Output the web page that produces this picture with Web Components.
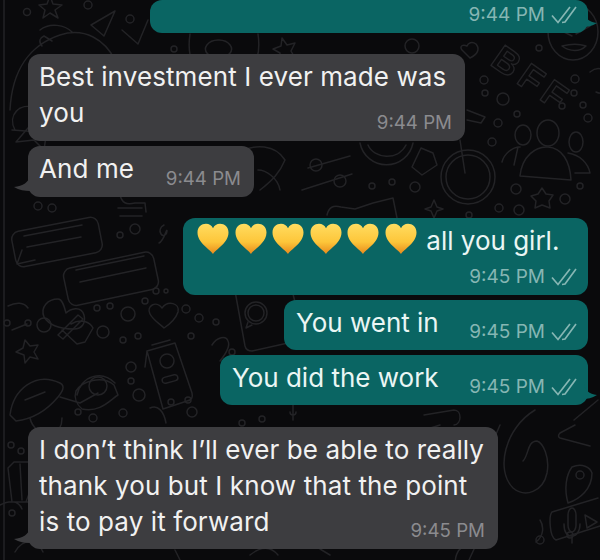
<!DOCTYPE html>
<html>
<head>
<meta charset="utf-8">
<style>
  html, body { margin: 0; padding: 0; background: #0a0a0c; }
  body { width: 600px; height: 560px; overflow: hidden; font-family: Inter, "Liberation Sans", sans-serif; }
</style>
</head>
<body>
<chat-wallpaper></chat-wallpaper>
<chat-thread>
  <chat-bubble side="out" time="9:44 PM" tail style="--w:438px;--h:33px;--gap:0px"></chat-bubble>
  <chat-bubble side="in" time="9:44 PM" style="--w:437px;--h:87px;--gap:21px">Best investment I ever made was<br>you</chat-bubble>
  <chat-bubble side="in" time="9:44 PM" tail style="--w:226px;--h:51px;--gap:5px">And me</chat-bubble>
  <chat-bubble side="out" time="9:45 PM" style="--w:405px;--h:77px;--gap:21px"><heart-row count="6"></heart-row> all you girl.</chat-bubble>
  <chat-bubble side="out" time="9:45 PM" style="--w:304px;--h:50px;--gap:5px">You went in</chat-bubble>
  <chat-bubble side="out" time="9:45 PM" tail style="--w:368px;--h:50px;--gap:5px">You did the work</chat-bubble>
  <chat-bubble side="in" time="9:45 PM" tail style="--w:470px;--h:122px;--gap:22px">I don’t think I’ll ever be able to really<br>thank you but I know that the point<br>is to pay it forward</chat-bubble>
</chat-thread>

<script>
class ChatWallpaper extends HTMLElement {
  constructor() {
    super();
    this.shadowDOM = this.attachShadow({ mode: "open" });
  }

  connectedCallback() {
    // small bubbles scattered through the doodles: x, y, r
    const dots = [
      [27,12,3.5],[88,5,4],[130,19,4],[174,49,3],[38,206,4],[52,208,4],[135,229,5],[120,235,3],
      [412,46,7],[488,14,3],[539,48,3],[484,80,4],[485,93,3],[503,99,6],[575,79,4],[574,93,3],
      [562,106,3],[583,105,3],[517,114,3],[588,118,4],[498,123,4],[492,142,4],[372,186,3],[392,182,3],
      [415,187,5],[516,189,5],[565,199,5],[499,208,4],[519,210,5],[469,215,3],[580,186,3],
      [7,323,3],[28,323,3],[44,325,7],[97,308,3],[110,306,3],[128,314,7],[103,332,6],[123,340,3],
      [138,336,3],[156,291,3],[166,291,2],[145,301,3],[186,309,4],[199,318,4],[216,322,3],[191,336,3],
      [131,367,5],[131,381,3],[139,395,6],[78,412,3],[93,418,4],[123,413,4],[188,400,3],[171,402,3],
      [192,412,5],[242,423,3],[262,419,3],[11,445,3],[21,451,3],[12,513,3],[540,540,4],[570,535,3]
    ].map(([x, y, r]) => `<circle cx="${x}" cy="${y}" r="${r}"/>`).join("");

    this.shadowDOM.innerHTML = `
      <style>
        :host { position: absolute; left: 0; top: 0; width: 600px; height: 560px; display: block; }
        svg { display: block; }
        g { fill: none; stroke: #232326; stroke-width: 1.5; stroke-linejoin: round; stroke-linecap: round; filter: blur(.4px); }
        text { font: 700 36px "Liberation Sans", sans-serif; letter-spacing: 6px; fill: none; stroke: #232326; stroke-width: 1.4; }
      </style>
      <svg width="600" height="560" viewBox="0 0 600 560" aria-hidden="true">
        <g>
          <path d="M4 0V560"/>
          ${dots}
          <path d="M50 -4l3 8 9 1-7 5 3 8-8-5-7 5 2-8-6-5 8-1z"/>
          <path d="M115 11L91 25l13 11zM104 36l11-25"/>
          <path d="M122 30l16 14 10-24"/>
          <path d="M10 110C12 70 30 45 60 35c25-8 45 5 55 25M40 30c10-8 25-5 32 2M42 46c-4-5-2-8 2-10l8 5"/>
          <path d="M190 34c-3 20 2 35 15 44M258 34c3 20-3 35-15 44M218 40a13 9 0 1 0 1 0z"/>
          <path d="M282 38l5 7 8-2-4 8 4 7-9-2-6 6v-9l-7-4 8-3z"/>
          <path d="M15 130c-8-15 5-28 20-22M12 130l28 2M28 128l-12 14 18-2 10 10 2-14 12-6-14-4-6-12-4 12z"/>
          <path d="M240 152c15-8 35-8 45 8-5 12-12 20-25 30M258 170c8 0 20 8 22 20"/>
          <path d="M120 195c2 8 6 10 15 8h10l1 9M118 208h24M120 216h22"/>
          <rect x="13" y="224" width="88" height="36" rx="8" transform="rotate(-11 57 242)"/>
          <path d="M22 250l-5 14 18-4M24 236l58-11M27 247l54-10"/>
          <rect x="65" y="260" width="92" height="38" rx="8" transform="rotate(-12 110 279)"/>
          <path d="M76 270l68-14M80 282l66-14"/>
          <path d="M164 225c-4 2-5 6-3 9s6 1 6-3-3 10-8 12"/>
          <path d="M302 190l50-16M308 168l42-12"/>
          <circle cx="316" cy="165" r="6"/><circle cx="340" cy="181" r="6"/>
          <path d="M360 143a27 27 0 0 0 53 0M368 145c6 14 30 16 38 0"/>
          <path d="M467 110l18 7-4 6-14-3M460 140l5 33M421 148l12 5 4 12-15 10-10-8z"/>
          <circle cx="468" cy="177" r="27"/><circle cx="468" cy="177" r="22"/>
          <path d="M520 176c2-20 16-30 28-29 14 1 22 14 23 33z"/>
          <ellipse cx="548" cy="133" rx="11" ry="13"/>
          <ellipse cx="523" cy="135" rx="8" ry="10"/>
          <ellipse cx="576" cy="142" rx="7" ry="10"/>
          <path d="M502 162c2-8 10-15 18-15M518 147l-4 18zM568 153c12 2 20 10 22 20l-15 0"/>
          <path d="M542 188l4 6 7 1-4 6 1 7-8-3-7 3 1-7-5-5 7-2z"/>
          <path d="M434 200l3 7 6 2-6 2-3 7-3-7-6-2 6-2z"/>
          <path d="M327 215c2-8 6-10 14-8l14 2 18-6 20-5 4 20"/>
          <ellipse cx="573" cy="32" rx="25" ry="28"/>
          <path d="M562 46c8 6 18 6 24 0-6-2-16-2-24 0zM556 28l16 8M590 26l-14 8"/>
          <path d="M590 72c10-8 22 0 18 14-2 8-8 8-12 6"/>
          <path d="M462 50l8 8c8-4 10-9 6-14-4-3-8-1-9 2-4-2-8 0-5 4z"/>
          <text x="0" y="0" transform="translate(489 64) rotate(35)">BFF</text>
          <path d="M58 299c-10 0-18 8-14 18 5 8 15 12 30 12 8 0 12-6 10-14-3-10-14-6-18-2-2-8-4-14-8-14z"/>
          <path d="M8 306c8-4 16-4 20 2M12 330l15-6"/>
          <path d="M25 340l5 6 8-1-4 7 4 7-8-2-5 6-1-8-8-3 7-4z"/>
          <path d="M58 335l20-20 5 4-20 20zM62 330l15 14 8-2 8-14c-3-6-12-10-22-4"/>
          <path d="M10 415c3-25 25-44 50-32 6 3 2 9-2 14-10 12-25 22-42 24zM25 400l20-8"/>
          <path d="M77 395c5-20 25-25 38-12M60 397l20 6 18-10M118 395c-8 5-18 18-36 14-6-5-8-12-6-18 6-10 26-16 38-6z"/>
          <circle cx="98" cy="386" r="9"/>
          <path d="M30 418c2 10 12 18 22 16 6-2 10-7 10-16"/>
          <path d="M175 343l-28 8 16 58 24-8c5-1 6-4 5-8zM147 351l-2 16M152 345l18-5"/>
          <circle cx="167" cy="361" r="7"/>
          <rect x="162" y="376" width="16" height="6" rx="3" transform="rotate(-15 170 379)"/>
          <path d="M162 308c-6-8-16-2-12 6 3 6 10 10 14 14 6-4 12-10 14-16 2-9-10-12-16-4z"/>
          <path d="M233 280l48-8c5 0 8 2 8 6l14 56c0 4-2 6-6 7l-45 10c-4 0-6-1-7-5z"/>
          <circle cx="256" cy="313" r="11"/><circle cx="256" cy="313" r="8"/>
          <path d="M248 322l-2 6 6-3"/>
          <circle cx="232" cy="352" r="3"/>
          <path d="M212 345c5-8 14-10 16-4 3 6-4 15-8 20"/>
          <path d="M150 408c8-4 14 4 16 15"/>
          <path d="M293 405v15M290 412a3 3 0 1 0 6 0"/>
          <path d="M424 415l30-5c8 0 8 14 0 15M440 425l-16 5M500 425l-30 70c-4 14 4 22 18 16"/>
          <path d="M535 410c-30 18-40 60-22 78 12 10 30 4 34-15 3-16-4-30-10-32-10 0-8 14-14 20"/>
          <path d="M575 425l-15 8c-2 2-2 4 0 5l30 8M598 400l-24 20"/>
          <path d="M572 467c-6 8-8 22-4 36 12-4 24-14 24-30-2-6-10-10-20-6z"/>
          <circle cx="580" cy="475" r="4"/>
          <path d="M552 512l46-14M556 540l44-14M552 512c-3 3-3 25 4 28"/>
          <path d="M568 515a4 7 0 1 1 8 0v10a4 7 0 1 1-8 0zM564 524c0 10 4 12 8 12s8-4 8-12M572 536v7"/>
          <path d="M585 515l12 7-10 6z"/>
          <path d="M0 505c8-4 18-6 22 4M14 462h16v40H12l-4-34zM20 464l2 36M28 462c6 4 6 20-2 40"/>
          <path d="M15 552c8-14 22-14 28 0M330 555l-10-6M470 545c-12 0-20 15-10 28"/>
          <path d="M180 560l-5-10M250 555c10-8 20-10 28 0"/>
          <path d="M475 547l-6 13M486 522c-8 5-4 14 4 16M540 520c4 6 4 16-4 22"/>
        </g>
      </svg>`;
  }
}

class ChatThread extends HTMLElement {
  constructor() {
    super();
    this.shadowDOM = this.attachShadow({ mode: "open" });
    this.shadowDOM.innerHTML = `
      <style>
        :host { position: relative; display: flex; flex-direction: column; padding: 0 12px 0 28px; }
      </style>
      <slot></slot>`;
  }
}

class HeartRow extends HTMLElement {
  constructor() {
    super();
    this.shadowDOM = this.attachShadow({ mode: "open" });
  }

  connectedCallback() {
    const count = Number(this.getAttribute("count") || 1);
    let hearts = "";
    for (let i = 0; i < count; i++) {
      hearts += `
        <svg width="32" height="32" viewBox="0 0 32 32" aria-hidden="true">
          <defs>
            <linearGradient id="g${i}" x1="0" y1="0" x2="0" y2="1">
              <stop offset="0" stop-color="#ffdc60"/>
              <stop offset=".6" stop-color="#fdc63a"/>
              <stop offset="1" stop-color="#e88a1c"/>
            </linearGradient>
          </defs>
          <path fill="url(#g${i})" d="M16 31C13.500 26.500 .5 20 .5 9.500 .5 4 4.500 .8 9 .8c3.200 0 5.700 1.700 7 4.400C17.300 2.500 19.800 .8 23 .8c4.500 0 8.500 3.200 8.500 8.700C31.500 20 18.500 26.500 16 31z"/>
        </svg>`;
    }
    this.shadowDOM.innerHTML = `
      <style>
        :host { display: inline-flex; gap: 5.6px; vertical-align: -5px; margin: 0 2px 0 2px; }
        svg { display: block; }
      </style>
      ${hearts}`;
  }
}

class ChatBubble extends HTMLElement {
  constructor() {
    super();
    this.shadowDOM = this.attachShadow({ mode: "open" });
  }

  connectedCallback() {
    const side = this.getAttribute("side");
    const tail = this.hasAttribute("tail");
    const ticks = side === "out" ? `
      <svg class="ticks" width="26" height="18" viewBox="0 0 26 18" aria-hidden="true">
        <path d="M1 9.500l6 7L19 1"/>
        <path d="M11 16.500l3-.5L25 1"/>
      </svg>` : "";
    const tailShape = !tail ? "" : side === "out"
      ? `<svg class="tail" width="16" height="16" viewBox="0 0 16 16" aria-hidden="true"><path d="M0 0c1 6 5 10 13 11-5 3-10 4-13 4z"/></svg>`
      : `<svg class="tail" width="16" height="16" viewBox="0 0 16 16" aria-hidden="true"><path d="M16 0C15 6 9 10 0 11c5 3 11 4 16 4z"/></svg>`;

    this.shadowDOM.innerHTML = `
      <style>
        :host {
          display: block;
          position: relative;
          box-sizing: border-box;
          width: var(--w);
          height: var(--h);
          margin-top: var(--gap);
          padding: 5px 13px 0 11px;
          border-radius: 12px;
          font-size: 26px;
          line-height: 36px;
          letter-spacing: 0.1px;
          color: #f1f1f1;
          background: #3d3d40;
        }
        :host([side="out"]) {
          align-self: flex-end;
          color: #eaf6f4;
          background: #0a6563;
          padding-left: 12px;
          padding-right: 11px;
          letter-spacing: 0;
        }
        .text { white-space: nowrap; }
        .meta {
          position: absolute;
          right: 13px;
          bottom: 6px;
          display: flex;
          align-items: center;
          gap: 6px;
          font-size: 18.7px;
          line-height: 24px;
          letter-spacing: 0;
          color: #8b8b8f;
        }
        :host([side="out"]) .meta { right: 11px; bottom: 6px; font-size: 19px; color: #86b6b3; }
        .ticks { display: block; }
        .ticks path { fill: none; stroke: #86b6b3; stroke-width: 1.7; }
        .tail { position: absolute; bottom: 5px; }
        :host([side="in"]) .tail { left: -14px; fill: #3d3d40; }
        :host([side="out"]) .tail { right: -12px; fill: #0a6563; }
      </style>
      <div class="text"><slot></slot></div>
      <div class="meta"><span>${this.getAttribute("time")}</span>${ticks}</div>
      ${tailShape}`;
  }
}

customElements.define("chat-wallpaper", ChatWallpaper);
customElements.define("chat-thread", ChatThread);
customElements.define("heart-row", HeartRow);
customElements.define("chat-bubble", ChatBubble);
</script>
</body>
</html>
